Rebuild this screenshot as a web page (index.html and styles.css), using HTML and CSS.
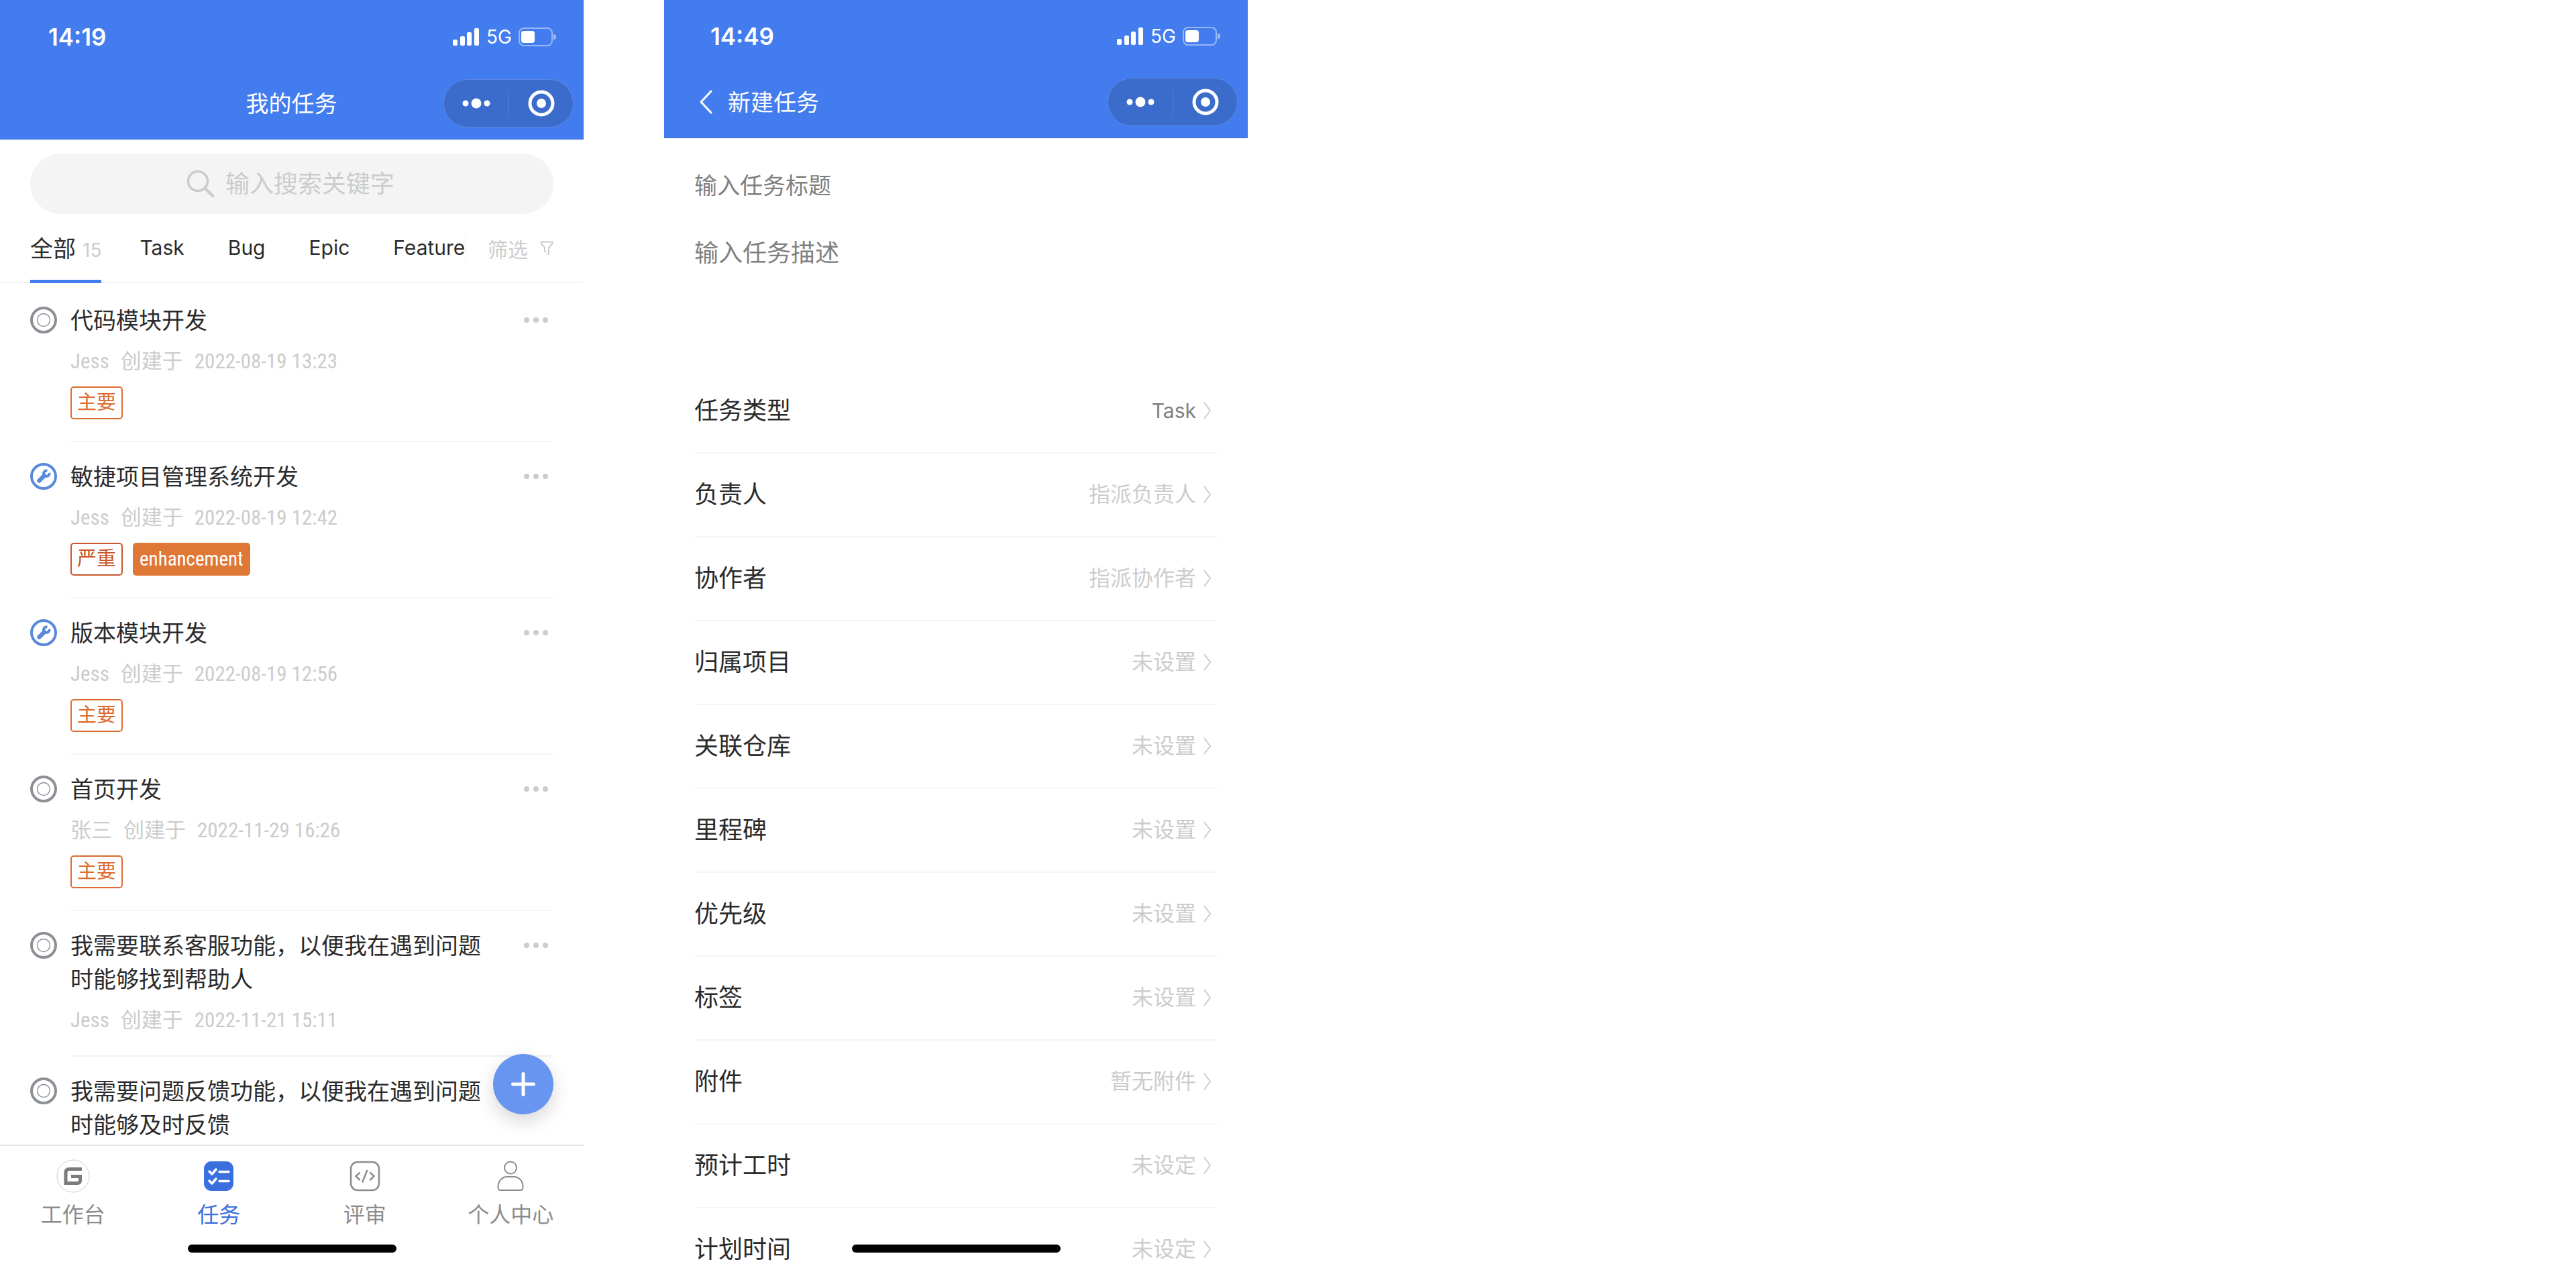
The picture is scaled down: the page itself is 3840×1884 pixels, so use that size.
FILE: index.html
```html
<!DOCTYPE html>
<html lang="zh-CN">
<head>
<meta charset="utf-8">
<meta name="viewport" content="width=device-width, initial-scale=1">
<title>我的任务</title>
<link rel="stylesheet" href="styles.css">
</head>
<body>
<svg class="sprite" aria-hidden="true">
  <symbol id="signal" viewBox="0 0 40 26"><g fill="#fff"><rect x="0" y="17" width="7" height="9" rx="2"/><rect x="11" y="12" width="7" height="14" rx="2"/><rect x="21" y="6" width="7" height="20" rx="2"/><rect x="32" y="0" width="7" height="26" rx="2"/></g></symbol>
  <symbol id="battery" viewBox="0 0 56 28"><rect x="1" y="1" width="49" height="26" rx="7" fill="none" stroke="#fff" stroke-opacity=".45" stroke-width="2"/><rect x="4" y="5" width="20" height="18" rx="4" fill="#fff"/><path d="M52 10a4 4 0 0 1 0 8z" fill="#fff" fill-opacity=".5"/></symbol>
  <symbol id="dots" viewBox="0 0 42 16"><g fill="#fff"><circle cx="5" cy="8" r="4.500"/><circle cx="21" cy="8" r="7.500"/><circle cx="37" cy="8" r="4.500"/></g></symbol>
  <symbol id="target" viewBox="0 0 40 40"><circle cx="20" cy="20" r="17" fill="none" stroke="#fff" stroke-width="5"/><circle cx="20" cy="20" r="7" fill="#fff"/></symbol>
  <symbol id="more" viewBox="0 0 38 10"><g fill="#ccc"><circle cx="5" cy="5" r="4"/><circle cx="19" cy="5" r="4"/><circle cx="33" cy="5" r="4"/></g></symbol>
  <symbol id="todo" viewBox="0 0 40 40"><circle cx="20" cy="20" r="18" fill="none" stroke="#8c9096" stroke-width="4"/><circle cx="20" cy="20" r="9.5" fill="none" stroke="#8c9096" stroke-width="1.4"/></symbol>
  <symbol id="doing" viewBox="0 0 40 40"><g fill="none" stroke="#5b89da"><circle cx="20" cy="20" r="18" stroke-width="4"/><path d="M25.500 11.600A4.300 4.300 0 1 0 28.400 14.700" stroke-width="4"/><path d="M21 19 13.500 26.500" stroke-width="6.500" stroke-linecap="round"/></g></symbol>
  <symbol id="chevron" viewBox="0 0 14 32"><path d="M2 4 11 16 2 28" fill="none" stroke="#ccc" stroke-width="2"/></symbol>
</svg>
<main class="screens">
  <section class="phone phone--list">
    <header class="header">
      <div class="status"><span class="clock">14:19</span><span class="signals"><svg width="40" height="26"><use href="#signal"/></svg><span>5G</span><svg width="56" height="28"><use href="#battery"/></svg></span></div>
      <div class="navbar"><h1 class="heading heading--center">我的任务</h1>
        <div class="capsule"><button aria-label="更多"><svg width="42" height="16"><use href="#dots"/></svg></button><button aria-label="关闭"><svg width="40" height="40"><use href="#target"/></svg></button></div></div>
    </header>
    <label class="search"><svg width="42" height="42" viewBox="0 0 42 42" fill="none" stroke="#ccc" stroke-linecap="round"><circle cx="17" cy="17" r="14.500" stroke-width="3.500"/><path d="M27 27 39 39" stroke-width="4.500"/></svg><input type="search" aria-label="搜索" placeholder="输入搜索关键字"></label>
    <nav class="tabs">
      <button class="tab tab--active">全部<span>15</span></button><button class="tab">Task</button><button class="tab">Bug</button><button class="tab">Epic</button><button class="tab">Feature</button>
      <button class="filter">筛选<svg width="20" height="22" viewBox="0 0 20 22" fill="none" stroke="#ccc" stroke-width="2" stroke-linejoin="round"><path d="M1.500 1.500h17v2.500l-5.500 6v10M7 16v-6L1.500 4V1.500M7 16l2 1M10.500 20H13"/></svg></button>
    </nav>
    <ul class="tasks">
      <li class="task"><svg class="state" width="40" height="40"><use href="#todo"/></svg><div class="body"><h2>代码模块开发</h2><p class="meta"><span>Jess</span><span>创建于</span><time>2022-08-19 13:23</time></p><div class="tags"><span class="tag">主要</span></div></div><button class="more" aria-label="更多"><svg width="38" height="10"><use href="#more"/></svg></button></li>
      <li class="task"><svg class="state" width="40" height="40"><use href="#doing"/></svg><div class="body"><h2>敏捷项目管理系统开发</h2><p class="meta"><span>Jess</span><span>创建于</span><time>2022-08-19 12:42</time></p><div class="tags"><span class="tag tag--severe">严重</span><span class="tag tag--fill">enhancement</span></div></div><button class="more" aria-label="更多"><svg width="38" height="10"><use href="#more"/></svg></button></li>
      <li class="task"><svg class="state" width="40" height="40"><use href="#doing"/></svg><div class="body"><h2>版本模块开发</h2><p class="meta"><span>Jess</span><span>创建于</span><time>2022-08-19 12:56</time></p><div class="tags"><span class="tag">主要</span></div></div><button class="more" aria-label="更多"><svg width="38" height="10"><use href="#more"/></svg></button></li>
      <li class="task"><svg class="state" width="40" height="40"><use href="#todo"/></svg><div class="body"><h2>首页开发</h2><p class="meta"><span>张三</span><span>创建于</span><time>2022-11-29 16:26</time></p><div class="tags"><span class="tag">主要</span></div></div><button class="more" aria-label="更多"><svg width="38" height="10"><use href="#more"/></svg></button></li>
      <li class="task"><svg class="state" width="40" height="40"><use href="#todo"/></svg><div class="body"><h2>我需要联系客服功能，以便我在遇到问题时能够找到帮助人</h2><p class="meta"><span>Jess</span><span>创建于</span><time>2022-11-21 15:11</time></p></div><button class="more" aria-label="更多"><svg width="38" height="10"><use href="#more"/></svg></button></li>
      <li class="task"><svg class="state" width="40" height="40"><use href="#todo"/></svg><div class="body"><h2>我需要问题反馈功能，以便我在遇到问题时能够及时反馈</h2></div></li>
    </ul>
    <button class="fab" aria-label="新建任务"><svg width="36" height="36" viewBox="0 0 36 36" stroke="#fff" stroke-width="5" stroke-linecap="round"><path d="M18 2.500v31M2.500 18h31"/></svg></button>
    <nav class="tabbar">
      <a href="#home"><svg width="50" height="50" viewBox="0 0 50 50" fill="none"><circle cx="25" cy="25" r="24" stroke="#ccc"/><path d="M38 14.500H19.500Q14 14.500 14 20V35.500H31.500Q35.500 35.500 35.500 31.500V25.500H22" stroke="#7b7b7b" stroke-width="5"/></svg>工作台</a>
      <a href="#tasks" class="current"><svg width="50" height="50" viewBox="0 0 50 50" fill="none" stroke="#fff" stroke-width="3.500" stroke-linecap="round" stroke-linejoin="round"><rect x="3" y="3" width="44" height="44" rx="11" fill="#3b6fde" stroke="none"/><path d="M11 18l4 4 6-7M11 32l4 4 6-7M26 18.500h14M26 32.500h14"/></svg>任务</a>
      <a href="#review"><svg width="50" height="50" viewBox="0 0 50 50" fill="none" stroke="#8c8c8c" stroke-width="2.500"><rect x="4" y="4" width="42" height="42" rx="10"/><path d="M17.500 19.500 11.500 25l6 6M32.500 19.500l6 5.500-6 6M28.500 16 21 34.500"/></svg>评审</a>
      <a href="#me"><svg width="50" height="50" viewBox="0 0 50 50" fill="none" stroke="#8c8c8c" stroke-width="2"><circle cx="25" cy="12.500" r="9"/><path d="M10 46H40Q43.500 46 43.500 41C43.500 32 37.500 26 30 26H20C12.500 26 6.500 32 6.500 41Q6.500 46 10 46z"/></svg>个人中心</a>
    </nav>
    <div class="indicator"></div>
  </section>
  <section class="phone phone--form">
    <header class="header">
      <div class="status"><span class="clock">14:49</span><span class="signals"><svg width="40" height="26"><use href="#signal"/></svg><span>5G</span><svg width="56" height="28"><use href="#battery"/></svg></span></div>
      <div class="navbar"><button class="back" aria-label="返回"><svg width="20" height="36" viewBox="0 0 20 36" fill="none" stroke="#fff" stroke-width="3" stroke-linecap="round"><path d="M18 2 3 18 18 34"/></svg></button><h1 class="heading">新建任务</h1>
        <div class="capsule"><button aria-label="更多"><svg width="42" height="16"><use href="#dots"/></svg></button><button aria-label="关闭"><svg width="40" height="40"><use href="#target"/></svg></button></div></div>
    </header>
    <form class="form">
      <input class="title" aria-label="任务标题" placeholder="输入任务标题">
      <textarea class="description" aria-label="任务描述" placeholder="输入任务描述"></textarea>
      <button type="button" class="row row--set"><b>任务类型</b><span>Task</span><svg width="14" height="32"><use href="#chevron"/></svg></button>
      <button type="button" class="row"><b>负责人</b><span>指派负责人</span><svg width="14" height="32"><use href="#chevron"/></svg></button>
      <button type="button" class="row"><b>协作者</b><span>指派协作者</span><svg width="14" height="32"><use href="#chevron"/></svg></button>
      <button type="button" class="row"><b>归属项目</b><span>未设置</span><svg width="14" height="32"><use href="#chevron"/></svg></button>
      <button type="button" class="row"><b>关联仓库</b><span>未设置</span><svg width="14" height="32"><use href="#chevron"/></svg></button>
      <button type="button" class="row"><b>里程碑</b><span>未设置</span><svg width="14" height="32"><use href="#chevron"/></svg></button>
      <button type="button" class="row"><b>优先级</b><span>未设置</span><svg width="14" height="32"><use href="#chevron"/></svg></button>
      <button type="button" class="row"><b>标签</b><span>未设置</span><svg width="14" height="32"><use href="#chevron"/></svg></button>
      <button type="button" class="row"><b>附件</b><span>暂无附件</span><svg width="14" height="32"><use href="#chevron"/></svg></button>
      <button type="button" class="row"><b>预计工时</b><span>未设定</span><svg width="14" height="32"><use href="#chevron"/></svg></button>
      <button type="button" class="row"><b>计划时间</b><span>未设定</span><svg width="14" height="32"><use href="#chevron"/></svg></button>
    </form>
    <div class="indicator"></div>
  </section>
</main>
</body>
</html>
```
FILE: styles.css
```css
*{box-sizing:border-box}
body{margin:0;background:#fff;color:#2b2b2b;font-family:Inter,"Noto Sans CJK SC",sans-serif;font-size:32px}
h1,h2,p,ul{margin:0;padding:0;font-weight:400;list-style:none}
button,input,textarea{font:inherit;color:inherit;border:0;padding:0;margin:0;background:none;outline:0}
svg{display:block;flex:none}
.sprite{display:none}

.screens{display:grid;grid-template-columns:29fr 4fr 29fr 66fr;height:100vh}
.phone{position:relative;display:flex;flex-direction:column;min-width:0;min-height:0;overflow:hidden;background:#fff}
.phone--form{grid-column:3}

/* header */
.header{flex:none;background:#437cee;color:#fff;padding-bottom:17px;border-bottom:1px solid #3f6fd6}
.status{display:flex;align-items:center;justify-content:space-between;height:110px;padding:0 41px 0 72px}
.phone--form .status{height:108px;padding-left:69px}
.clock{font-size:35px;font-weight:600}
.signals{display:flex;align-items:center;gap:10px;font-size:28px}
.navbar{display:flex;align-items:center;height:72px;margin-top:8px;padding:0 15px 0 52px}
.heading{flex:1;padding-top:2px;font-size:34px;line-height:48px}
.heading--center{text-align:center;padding-left:156px}
.back{width:43px}
.capsule{display:grid;grid-template-columns:1fr 1fr;align-items:center;width:194px;height:72px;border:1px solid #5b87de;border-radius:36px;background:#3b6bcb}
.capsule button{display:grid;place-items:center;height:40px}
.capsule button+button{border-left:1px solid #5580d6}

/* search and tabs */
.search{flex:none;display:flex;align-items:center;justify-content:center;gap:16px;height:90px;margin:21px 45px 0;border-radius:45px;background:#f4f4f4}
.search input{width:256px;height:54px;font-size:36px;appearance:none}
.search input::-webkit-search-cancel-button{display:none}
::placeholder{color:#808080;opacity:1}
.search ::placeholder{color:#ccc}
.tabs{flex:none;display:flex;align-items:stretch;height:103px;padding:0 45px;border-bottom:2px solid #f2f2f2}
.tab{margin-right:65px;margin-bottom:-2px;padding-top:2px;border-bottom:5px solid transparent;font-size:30px;white-space:nowrap}
.tab--active{margin-right:57px;padding-top:0;border-color:#437cee;font-size:34px}
.tab--active span{margin-left:10px;color:#ccc;font-size:28px}
.tab:nth-last-child(2){margin-right:0}
.filter{display:flex;align-items:center;gap:18px;align-self:center;flex:1;justify-content:flex-end;height:42px;border-left:2px solid #f4f4f4;color:#ccc;font-size:30px}

/* task list */
.tasks{flex:1;min-height:0;overflow:hidden;padding:4px 45px 0}
.task{position:relative;display:flex}
.state{margin:31px 20px 0 0}
.body{flex:1;padding:27px 0 32px;border-bottom:2px solid #f4f4f4}
.task h2{padding-right:100px;font-size:34px;line-height:50px}
.meta{display:flex;gap:17px;margin-top:16px;color:#ccc;font:31px/40px "Roboto Condensed","Noto Sans CJK SC",sans-serif}
.tags{display:flex;gap:15px;margin-top:17px}
.tag{padding:0 8px;border:2px solid currentColor;border-radius:5px;color:#dd6b2f;font:29px/45px "Roboto Condensed","Noto Sans CJK SC",sans-serif}
.tag--severe{color:#c9552a}
.tag--fill{border-color:#df7737;background:#df7737;color:#fff}
.more{position:absolute;right:7px;top:46px}
.fab{position:absolute;right:45px;bottom:223px;display:grid;place-items:center;width:90px;height:90px;border-radius:50%;background:#6795f0;box-shadow:0 10px 28px rgba(0,0,0,.16)}

/* bottom bar */
.tabbar{flex:none;display:grid;grid-template-columns:repeat(4,1fr);height:178px;padding-top:20px;border-top:2px solid #e2e2e2;background:#fff}
.tabbar a{display:flex;flex-direction:column;align-items:center;gap:10px;color:#8c8c8c;font-size:32px;line-height:46px;text-decoration:none}
.tabbar .current{color:#3b6fde}
.indicator{position:absolute;left:50%;bottom:17px;width:311px;height:12px;margin-left:-155px;border-radius:6px;background:#000}

/* task form */
.form{display:flex;flex-direction:column;padding:45px 45px 0}
.title{height:50px;font-size:34px}
.description{height:197px;margin:49px 0 4px;font-size:36px;line-height:54px;resize:none}
.row{flex:none;display:flex;align-items:center;height:125px;padding:0 8px 2px 0;border-bottom:2px solid #f5f5f5;text-align:left}
.row b{flex:1;font-size:36px;font-weight:400;line-height:40px}
.row span{margin-right:10px;color:#ccc;font-size:32px;line-height:40px}
.row--set span{color:#808080;font-size:30px}
```
